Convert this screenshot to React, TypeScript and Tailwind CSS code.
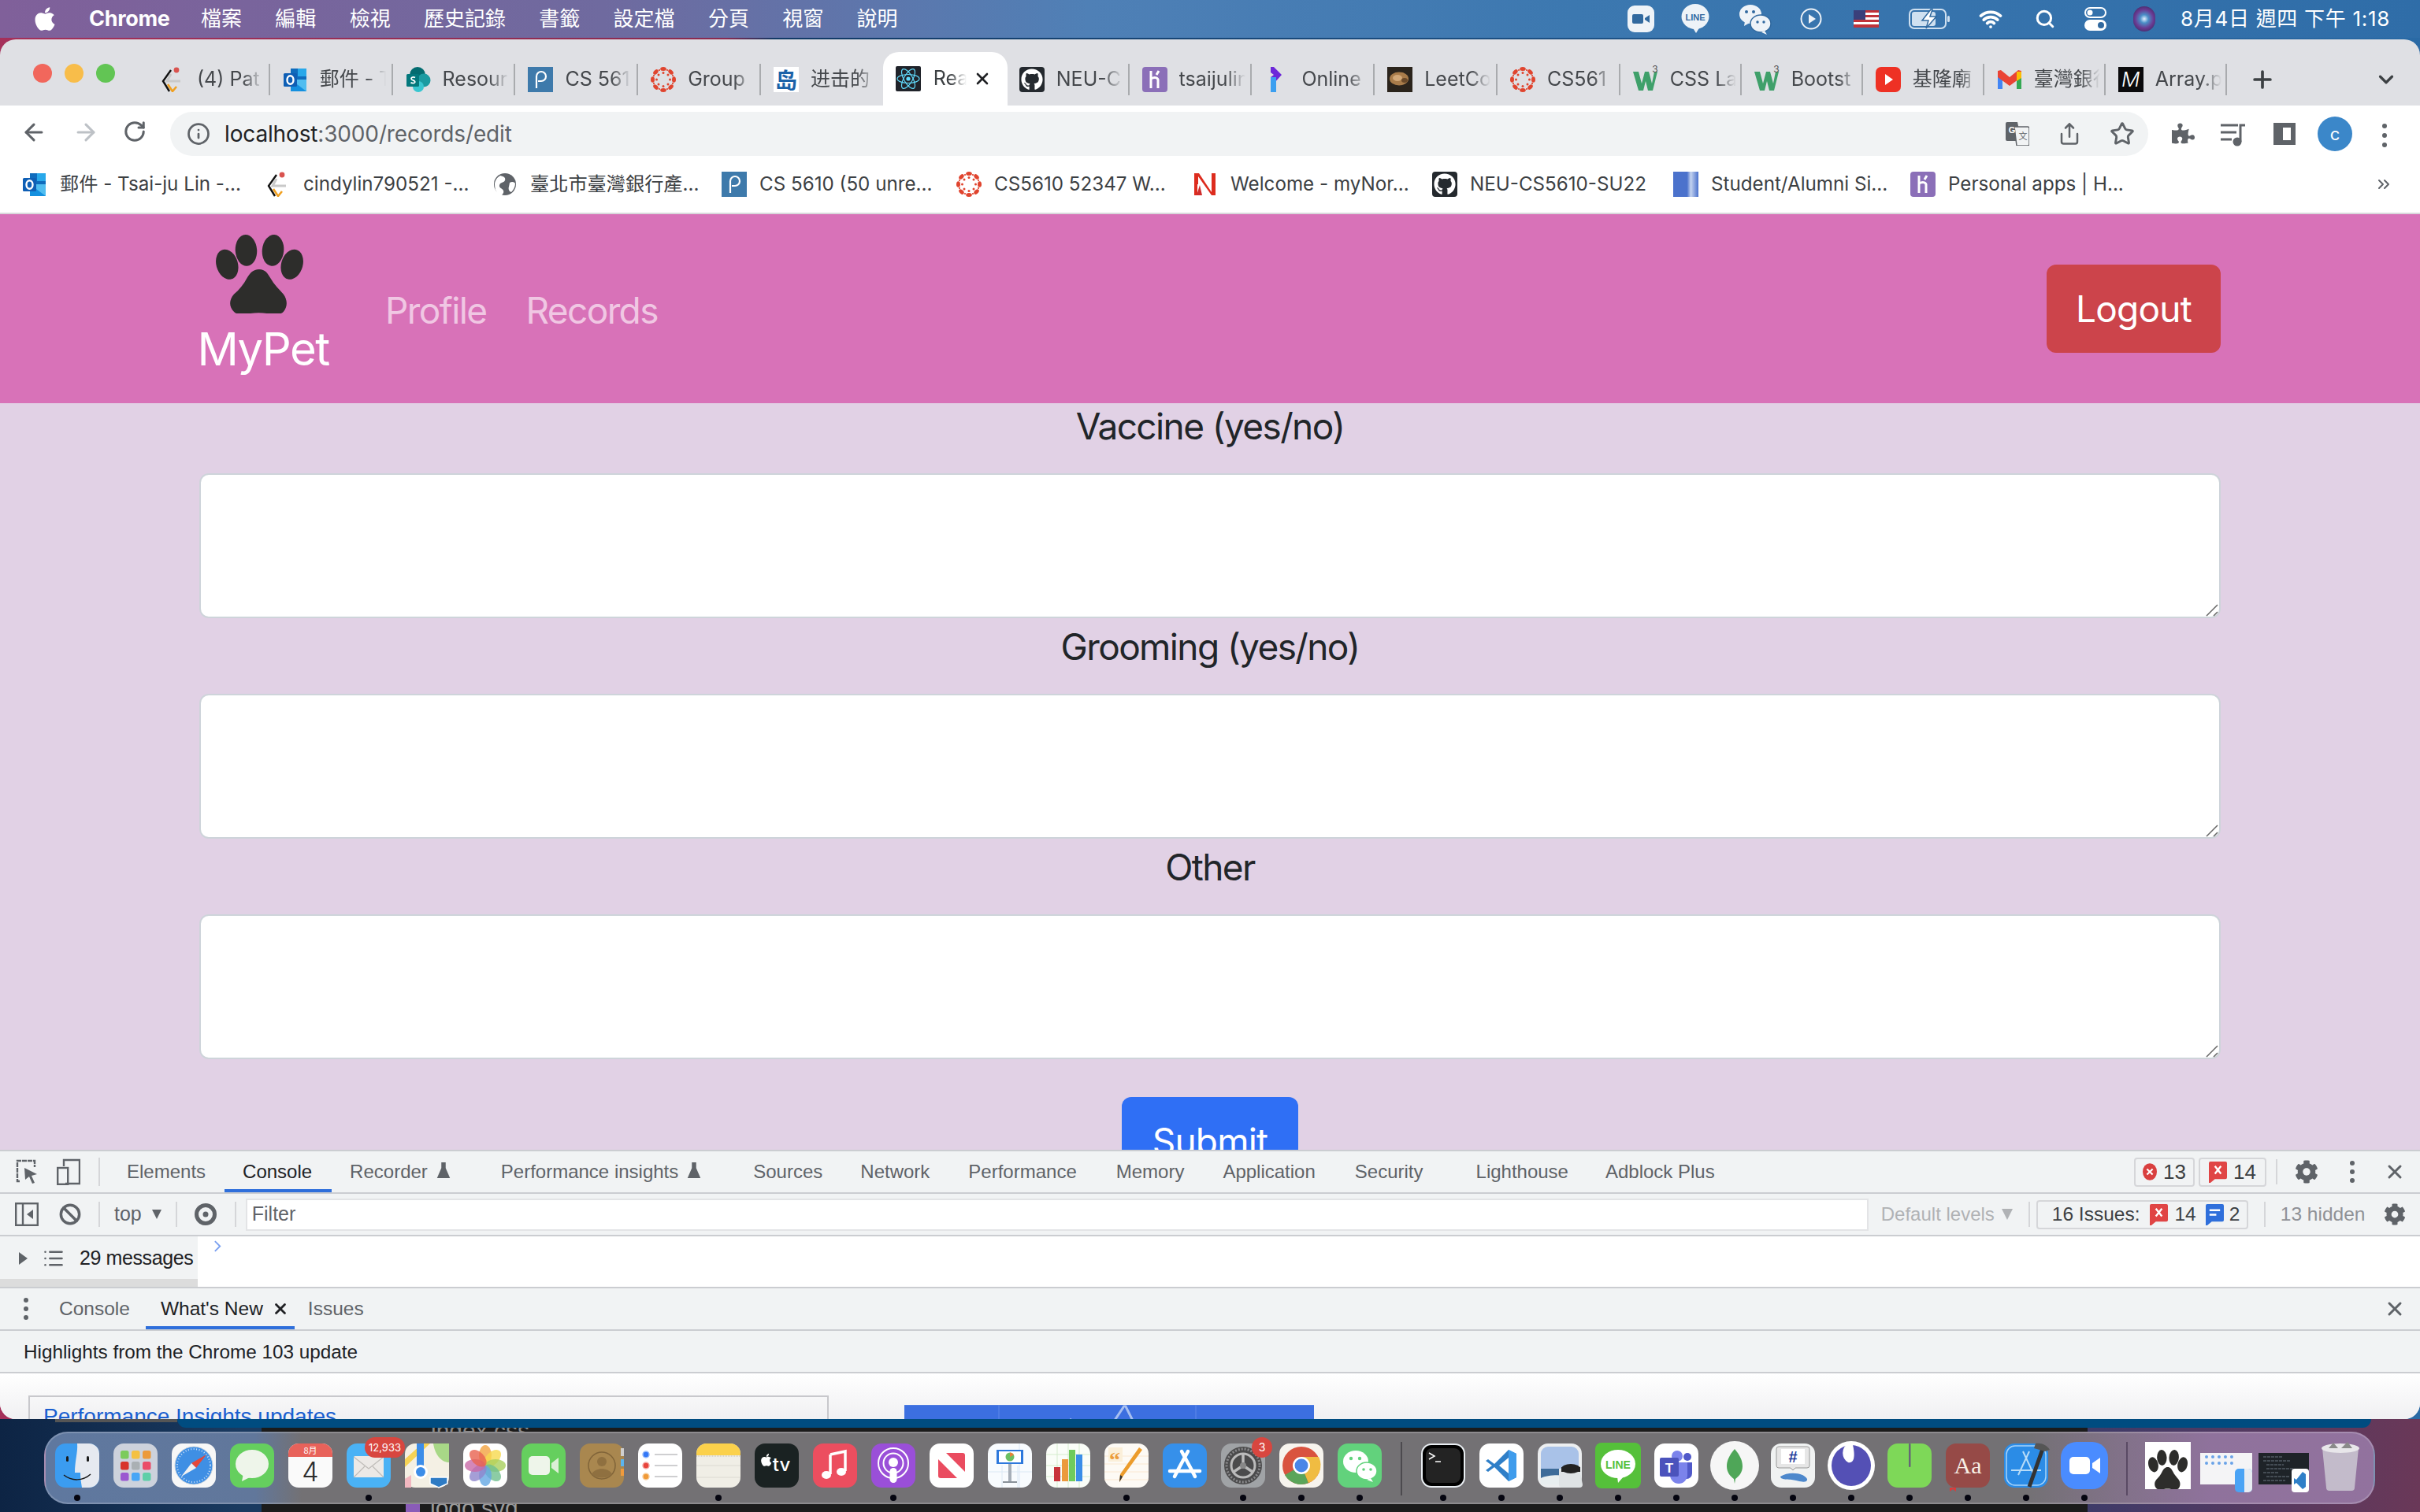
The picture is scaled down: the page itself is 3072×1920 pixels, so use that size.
import React from "react";
import { ArrowLeft, ArrowRight, RotateCw, Info, Share, Star, Wifi, Search, Plus, ChevronDown, X, ChevronsRight, Ban, List } from "lucide-react";
import { FaApple, FaCog, FaGithub, FaPuzzlePiece } from "react-icons/fa";

const cjk = "font-['Inter','Noto_Sans_CJK_TC',sans-serif]";
const dev = "font-['Liberation_Sans','Noto_Sans_CJK_TC',sans-serif]";

function Paw({ className }: { className?: string }) {
  return (
    <svg viewBox="6 0 101 98" preserveAspectRatio="none" className={className} fill="#2d2d2b">
      <ellipse cx="19" cy="37" rx="12.5" ry="19" transform="rotate(-14 19 37)" />
      <ellipse cx="41" cy="19.5" rx="12.5" ry="19.5" transform="rotate(-3 41 19.5)" />
      <ellipse cx="72" cy="19.5" rx="12.5" ry="19.5" transform="rotate(5 72 19.5)" />
      <ellipse cx="94" cy="37" rx="12.5" ry="19" transform="rotate(14 94 37)" />
      <path d="M56 43c7 0 10 5 13 11 4 8 10 14 15 20 5 7 5 16 0 22-5 5-12 3-19 2-6-1-13-1-19 0-7 1-14 3-19-2-6-6-6-15 0-22 6-5 11-12 15-20 3-6 7-11 14-11z" />
    </svg>
  );
}

/* ---------- favicons (32x32) ---------- */
const Fav = ({ children, className = "" }: { children: React.ReactNode; className?: string }) => (
  <svg viewBox="0 0 32 32" className={`w-8 h-8 shrink-0 ${className}`}>{children}</svg>
);
const Cf = () => (
  <Fav>
    <path d="M14 4 4 18l8 13" fill="none" stroke="#111" strokeWidth="2.4" />
    <path d="M14 9 9 18h17" fill="none" stroke="#c9c9c9" strokeWidth="3" />
    <path d="m10 22 6 9 5-6" fill="none" stroke="#f0a020" strokeWidth="2.6" />
    <circle cx="21" cy="4" r="3.4" fill="#d9534f" />
  </Fav>
);
const Outlook = () => (
  <Fav>
    <rect x="10" y="2" width="20" height="14" fill="#0f6cbd" />
    <rect x="19" y="2" width="11" height="10" fill="#28a8ea" />
    <path d="M10 16h20v15H10z" fill="#1490df" />
    <path d="m10 16 20 15V16z" fill="#50bdf0" />
    <rect x="1" y="8" width="17" height="17" rx="1.5" fill="#0f5fb5" />
    <ellipse cx="9.500" cy="16.500" rx="4" ry="5.200" fill="none" stroke="#fff" strokeWidth="2.400" />
  </Fav>
);
const SharePoint = () => (
  <Fav>
    <circle cx="15" cy="10" r="10" fill="#036c70" />
    <circle cx="23" cy="17" r="8.500" fill="#1a9ba1" />
    <circle cx="16" cy="25" r="7" fill="#37c6d0" />
    <rect x="1" y="9" width="16" height="16" rx="1.500" fill="#03787c" />
    <path d="M12 13.500c-3-1.500-6 0-4.500 2.200 1 1.300 4.800 1.700 4.200 3.800-.6 1.700-3.800 1.400-5.200.3" fill="none" stroke="#fff" strokeWidth="1.800" />
  </Fav>
);
const Piazza = () => (
  <Fav>
    <rect width="32" height="32" fill="#3e7aab" />
    <path d="M11 27V12a6 6 0 1 1 6 6h-4" fill="none" stroke="#fff" strokeWidth="2.200" />
  </Fav>
);
const Canvas = () => (
  <Fav>
    {Array.from({ length: 8 }).map((_, i) => {
      const a = (i * Math.PI) / 4 - Math.PI / 2;
      const b = a + Math.PI / 8;
      return (
        <g key={i} fill="#e0442e">
          <ellipse cx={16 + 13.5 * Math.cos(a)} cy={16 + 13.5 * Math.sin(a)} rx="3.800" ry="2.500" transform={`rotate(${i * 45} ${16 + 13.5 * Math.cos(a)} ${16 + 13.5 * Math.sin(a)})`} />
          <circle cx={16 + 8.5 * Math.cos(a)} cy={16 + 8.5 * Math.sin(a)} r="1.500" />
          <circle cx={16 + 13 * Math.cos(b)} cy={16 + 13 * Math.sin(b)} r="1.100" />
        </g>
      );
    })}
  </Fav>
);
const Dao = () => (
  <span className="w-8 h-8 shrink-0 bg-white text-[#1b62a8] text-[28px] leading-8 font-bold text-center font-['Noto_Sans_CJK_SC',sans-serif]">岛</span>
);
const ReactFav = () => (
  <Fav>
    <rect width="32" height="32" rx="2" fill="#20232a" />
    <g fill="none" stroke="#61dafb" strokeWidth="1.200">
      <ellipse cx="16" cy="16" rx="14" ry="5.500" />
      <ellipse cx="16" cy="16" rx="14" ry="5.500" transform="rotate(60 16 16)" />
      <ellipse cx="16" cy="16" rx="14" ry="5.500" transform="rotate(120 16 16)" />
    </g>
    <circle cx="16" cy="16" r="2.600" fill="#61dafb" />
  </Fav>
);
const GitHub = () => (
  <span className="w-8 h-8 shrink-0 rounded-[4px] bg-[#24292e] flex items-center justify-center text-white"><FaGithub size={28} /></span>
);
const Heroku = () => (
  <Fav>
    <rect width="32" height="32" rx="4" fill="#8b6fb8" />
    <path d="M11 5v22M11 15c4-2 8-2 9 1v11M21 5l-3 5" fill="none" stroke="#fff" strokeWidth="3" />
  </Fav>
);
const Pluralsight = () => (
  <Fav>
    <path d="M8 0h4l10 10-10 11H8v-8l4-3-4-3z" fill="#6d28d9" />
    <path d="M8 13h7v3H15v16H8z" fill="#3b9ff0" />
  </Fav>
);
const Cat = () => (
  <Fav>
    <rect width="32" height="32" fill="#2b241c" />
    <ellipse cx="15" cy="15" rx="12" ry="8.500" fill="#a97c4a" />
    <ellipse cx="13" cy="14" rx="6" ry="4" fill="#d2a878" />
    <ellipse cx="22" cy="17" rx="4" ry="3" fill="#6b4a2a" />
  </Fav>
);
const W3 = () => (
  <span className="relative w-8 h-8 shrink-0">
    <svg viewBox="0 0 32 32" className="w-8 h-8"><path d="M0 6h7l4 15 4-15h5l4 15 3-15h4l-6 24h-6l-3-12-3 12H7z" fill="#3fa06a" /></svg>
    <span className="absolute -top-[3px] right-0 text-[12px] leading-none text-[#555]">3</span>
  </span>
);
const Youtube = () => (
  <Fav>
    <rect y="0" width="32" height="32" rx="7" fill="#ee3124" />
    <path d="m12 9 10 7-10 7z" fill="#fff" />
  </Fav>
);
const Gmail = () => (
  <Fav>
    <path d="M1 7v21h6V14z" fill="#4285f4" />
    <path d="M31 7v21h-6V14z" fill="#34a853" />
    <path d="M1 5v8l15 11 15-11V5l-4-1-11 9L5 4z" fill="#ea4335" />
    <path d="M25 6h6v8l-6 4z" fill="#fbbc04" />
  </Fav>
);
const MM = () => (
  <span className="w-8 h-8 shrink-0 bg-[#0b0b0d] text-white italic font-light text-[26px] leading-8 text-center font-['Inter',sans-serif]">M</span>
);
const Globe = () => (
  <Fav>
    <circle cx="16" cy="16" r="14" fill="#5f6368" />
    <path d="M10 5c5 1 7 3 6 6s-6 2-7 6 4 4 5 7-1 4-2 6c-2 0-4-1-6-3-2-3-3-7-3-11 0-4 3-9 7-11zM22 14c3-2 6-1 7 1 0 4-2 8-5 11-3-1-4-4-3-7z" fill="#fff" />
  </Fav>
);
const Norton = () => (
  <Fav>
    <path d="M2 2h6l16 24V2h5v28h-5L7 6v24H2z" fill="#dd2c1e" />
    <rect x="6" y="16" width="6" height="14" fill="#fff" />
    <path d="M5 30 9 17l3 13z" fill="#cf2e2e" />
  </Fav>
);
const DocBlue = () => (
  <span className="w-8 h-8 shrink-0 bg-[linear-gradient(90deg,#4b72cc_0%,#4b72cc_55%,#c4d3f0_70%,#4b72cc_100%)]" />
);

/* ---------- browser chrome ---------- */
type TabT = { t: string; icon: React.ReactNode; w: string };
const tabs: TabT[] = [
  { t: "(4) Pat", icon: <Cf />, w: "w-[155.800px]" },
  { t: "郵件 - Ts", icon: <Outlook />, w: "w-[155.800px]" },
  { t: "Resour", icon: <SharePoint />, w: "w-[155.800px]" },
  { t: "CS 561", icon: <Piazza />, w: "w-[155.800px]" },
  { t: "Group", icon: <Canvas />, w: "w-[155.800px]" },
  { t: "进击的", icon: <Dao />, w: "w-[155.800px]" },
  { t: "active", icon: <ReactFav />, w: "w-[155.800px]" },
  { t: "NEU-C", icon: <GitHub />, w: "w-[155.800px]" },
  { t: "tsaijulin", icon: <Heroku />, w: "w-[155.800px]" },
  { t: "Online", icon: <Pluralsight />, w: "w-[155.800px]" },
  { t: "LeetCo", icon: <Cat />, w: "w-[155.800px]" },
  { t: "CS561", icon: <Canvas />, w: "w-[155.800px]" },
  { t: "CSS La", icon: <W3 />, w: "w-[154px]" },
  { t: "Bootst", icon: <W3 />, w: "w-[154px]" },
  { t: "基隆廟", icon: <Youtube />, w: "w-[154px]" },
  { t: "臺灣銀行", icon: <Gmail />, w: "w-[154px]" },
  { t: "Array.p", icon: <MM />, w: "w-[154px]" },
];

const bookmarks: { t: string; icon: React.ReactNode; w: string }[] = [
  { t: "郵件 - Tsai-ju Lin -...", icon: <Outlook />, w: "w-[237px]" },
  { t: "cindylin790521 -...", icon: <Cf />, w: "w-[216px]" },
  { t: "臺北市臺灣銀行產...", icon: <Globe />, w: "w-[219px]" },
  { t: "CS 5610 (50 unre...", icon: <Piazza />, w: "w-[226px]" },
  { t: "CS5610 52347 W...", icon: <Canvas />, w: "w-[228px]" },
  { t: "Welcome - myNor...", icon: <Norton />, w: "w-[232px]" },
  { t: "NEU-CS5610-SU22", icon: <GitHub />, w: "w-[234px]" },
  { t: "Student/Alumni Si...", icon: <DocBlue />, w: "w-[229px]" },
  { t: "Personal apps | H...", icon: <Heroku />, w: "w-[229px]" },
];

function MenuBar() {
  const items = ["檔案", "編輯", "檢視", "歷史記錄", "書籤", "設定檔", "分頁", "視窗", "說明"];
  return (
    <div className={`h-12 flex items-center text-white text-[26px] bg-[linear-gradient(90deg,#80609a_0%,#6f6a9f_25%,#4f80b6_45%,#3c78b0_65%,#2f6da8_100%)] ${cjk}`}>
      <FaApple className="ml-[42px] w-[30px] h-[34px]" />
      <span className="ml-[41px] font-bold text-[27px] tracking-[-0.300px] w-[100px]">Chrome</span>
      <div className="ml-[42px] flex gap-[42.300px] leading-none">
        {items.map((m) => <span key={m}>{m}</span>)}
      </div>
      <div className="ml-auto flex items-center pr-[38px]">
        <svg viewBox="0 0 34 34" className="w-[34px] h-[34px]"><rect width="34" height="34" rx="9" fill="#eef3f8" /><rect x="6" y="11" width="14" height="12" rx="2" fill="#31699f" /><path d="m22 16 6-4v10l-6-4z" fill="#31699f" /></svg>
        <svg viewBox="0 0 36 40" className="w-[36px] h-[40px] ml-[34px]"><ellipse cx="18" cy="17" rx="17.500" ry="16" fill="#eef3f8" /><path d="M14 30h10l-5 8z" fill="#eef3f8" /><text x="18" y="22" textAnchor="middle" fontSize="11" fontWeight="700" fill="#31699f" fontFamily="Liberation Sans">LINE</text></svg>
        <svg viewBox="0 0 42 42" className="w-[42px] h-[42px] ml-[37px]"><ellipse cx="15" cy="15" rx="14" ry="12" fill="#eef3f8" /><path d="m8 24-1 6 7-4z" fill="#eef3f8" /><ellipse cx="28" cy="27" rx="13" ry="11" fill="#eef3f8" stroke="#31699f" strokeWidth="1.500" /><path d="m33 36 3 5-7-3z" fill="#eef3f8" /><circle cx="10" cy="12" r="2" fill="#31699f" /><circle cx="19" cy="12" r="2" fill="#31699f" /><circle cx="24" cy="25" r="1.700" fill="#31699f" /><circle cx="32" cy="25" r="1.700" fill="#31699f" /></svg>
        <svg viewBox="0 0 28 28" className="w-[28px] h-[28px] ml-[36px]"><circle cx="14" cy="14" r="12.500" fill="none" stroke="#eef3f8" strokeWidth="2" /><path d="m11 8 9 6-9 6z" fill="#eef3f8" /></svg>
        <svg viewBox="0 0 32 22" className="w-[32px] h-[22px] ml-[40px]"><rect width="32" height="22" fill="#fff" /><g fill="#c0323a"><rect width="32" height="3" /><rect y="6" width="32" height="3" /><rect y="12" width="32" height="3" /><rect y="18" width="32" height="4" /></g><rect width="15" height="12" fill="#3a3f7a" /></svg>
        <svg viewBox="0 0 52 26" className="w-[52px] h-[26px] ml-[38px]"><rect x="1" y="1" width="46" height="24" rx="6" fill="none" stroke="#cfe0f0" strokeWidth="2" /><rect x="4" y="4" width="30" height="18" rx="3" fill="#cfe0f0" /><rect x="49" y="9" width="3" height="8" rx="1.500" fill="#cfe0f0" /><path d="M28 1 17 15h8l-3 10 13-15h-8l3-9z" fill="#fff" stroke="#31699f" strokeWidth="1.500" /></svg>
        <Wifi className="w-[34px] h-[30px] ml-[35px]" strokeWidth={3} />
        <Search className="w-[26px] h-[28px] ml-[39px]" strokeWidth={2.800} />
        <svg viewBox="0 0 28 30" className="w-[28px] h-[30px] ml-[37px]"><rect x="1" y="1" width="26" height="12" rx="6" fill="none" stroke="#fff" strokeWidth="2" /><circle cx="7" cy="7" r="3.500" fill="#fff" /><rect y="16" width="28" height="14" rx="7" fill="#fff" /><circle cx="21" cy="23" r="4" fill="#31699f" /></svg>
        <span className="w-[28px] h-[32px] rounded-full ml-[34px] bg-[radial-gradient(circle,#e4f0ff_0%,#4a8fc8_25%,#6a3a92_55%,#2a2450_100%)]" />
        <span className="ml-[32px] leading-none whitespace-nowrap tracking-[0.700px]">8月4日 週四 下午 1:18</span>
      </div>
    </div>
  );
}

function TabStrip() {
  return (
    <div className={`h-[84px] bg-[#dfe0e4] flex items-start ${cjk}`}>
      <div className="w-[187px] pt-[31px] pl-[42px] flex gap-4 shrink-0">
        <span className="w-6 h-6 rounded-full bg-[#f1675c]" />
        <span className="w-6 h-6 rounded-full bg-[#f8bd4a]" />
        <span className="w-6 h-6 rounded-full bg-[#62c554]" />
      </div>
      {tabs.map((tab, i) =>
        tab.t === "active" ? (
          <div key={i} className="relative h-[68px] mt-4 w-[158px] -mx-px z-10 bg-white rounded-t-[20px] flex items-center pl-4 shrink-0">
            {tab.icon}
            <span className="ml-4 text-[25px] text-[#3c4043] w-[42px] overflow-hidden whitespace-nowrap [mask-image:linear-gradient(90deg,#000_50%,transparent)]">React App</span>
            <X className="w-[24px] h-[24px] ml-[8px] text-[#202124]" strokeWidth={2.600} />
          </div>
        ) : (
          <div key={i} className={`relative h-[40px] mt-[31px] flex items-center pl-[16px] shrink-0 ${tab.w} ${i === 5 ? "" : "border-r-2 border-[#a9abae]"}`}>
            {tab.icon}
            <span className="ml-[15px] w-[84px] text-[25px] text-[#45484c] overflow-hidden whitespace-nowrap [mask-image:linear-gradient(90deg,#000_70%,transparent)]">{tab.t}</span>
          </div>
        )
      )}
      <Plus className="ml-[28px] mt-[34px] w-[34px] h-[34px] text-[#3c4043]" strokeWidth={2.600} />
      <ChevronDown className="ml-[125px] mt-[36px] w-[30px] h-[30px] text-[#3c4043]" strokeWidth={2.600} />
    </div>
  );
}

function Toolbar() {
  return (
    <div className={`h-[64px] bg-white flex items-start ${cjk}`}>
      <ArrowLeft className="ml-[26px] mt-[17px] w-[34px] h-[34px] text-[#5f6368]" strokeWidth={2.200} />
      <ArrowRight className="ml-[32px] mt-[17px] w-[34px] h-[34px] text-[#bdc1c6]" strokeWidth={2.200} />
      <RotateCw className="ml-[30px] mt-[18px] w-[30px] h-[30px] text-[#5f6368]" strokeWidth={2.400} />
      <div className="ml-[30px] mt-2 w-[2511px] h-[56px] rounded-[28px] bg-[#f1f3f4] flex items-center pl-[21px]">
        <Info className="w-[30px] h-[30px] text-[#5f6368]" strokeWidth={2.200} />
        <span className="ml-[18px] text-[28px] tracking-[-0.150px] text-[#202124]">localhost<span className="text-[#5f6368]">:3000/records/edit</span></span>
        <div className="ml-auto flex items-center pr-[17px]">
          <svg viewBox="0 0 30 30" className="w-[30px] h-[30px]"><path d="M0 2a2 2 0 0 1 2-2h13l5 24H2a2 2 0 0 1-2-2z" fill="#5f6368" /><path d="M11 6h17a2 2 0 0 1 2 2v20a2 2 0 0 1-2 2H14z" fill="#f1f3f4" stroke="#5f6368" strokeWidth="1.500" /><text x="8" y="14" fontSize="11" fontWeight="700" fill="#fff" textAnchor="middle" fontFamily="Liberation Sans">G</text><text x="22" y="22" fontSize="11" fill="#5f6368" textAnchor="middle" fontFamily="Noto Sans CJK TC">文</text></svg>
          <Share className="ml-[36px] w-[30px] h-[32px] text-[#5f6368]" strokeWidth={2} />
          <Star className="ml-[36px] w-[32px] h-[32px] text-[#5f6368]" strokeWidth={2.200} />
        </div>
      </div>
      <FaPuzzlePiece className="ml-[30px] mt-[21px] w-[29px] h-[29px] text-[#5f6368]" />
      <svg viewBox="0 0 32 30" className="ml-[33px] mt-[22px] w-[32px] h-[30px]"><path d="M0 3h22M0 12h20M0 21h14" stroke="#5f6368" strokeWidth="3" /><path d="M25 24V3h6" fill="none" stroke="#5f6368" strokeWidth="3" /><circle cx="21" cy="24" r="5.500" fill="#5f6368" /></svg>
      <span className="ml-[35px] mt-[22px] w-[28px] h-[28px] border-[6px] border-[#5f6368] border-l-[12px] box-border" />
      <span className="ml-[28px] mt-[14px] w-[44px] h-[44px] rounded-full bg-[#3b87c9] text-white text-[22px] leading-[44px] text-center">c</span>
      <div className="ml-[38px] mt-[23px] flex flex-col gap-[6px]">
        <span className="w-[6px] h-[6px] rounded-full bg-[#5f6368]" />
        <span className="w-[6px] h-[6px] rounded-full bg-[#5f6368]" />
        <span className="w-[6px] h-[6px] rounded-full bg-[#5f6368]" />
      </div>
    </div>
  );
}

function Bookmarks() {
  return (
    <div className={`h-[74px] bg-white border-b-2 border-[#d9d9dc] flex items-center pl-[28px] ${cjk}`}>
      {bookmarks.map((b) => (
        <div key={b.t} className="flex items-center shrink-0">
          {b.icon}
          <span className={`ml-[16px] text-[24.200px] text-[#3c4043] whitespace-nowrap ${b.w}`}>{b.t}</span>
          <span className="w-[24px]" />
        </div>
      ))}
      <ChevronsRight className="ml-auto mr-[34px] w-[24px] h-[24px] text-[#5f6368]" strokeWidth={2} />
    </div>
  );
}

/* ---------- page ---------- */
function Field({ label, first }: { label: string; first?: boolean }) {
  return (
    <div className={first ? "-mt-[7px] flex flex-col" : "flex flex-col"}>
      <label className="h-[72px] mb-6 text-[46px] leading-[72px] text-center text-[#212529]">{label}</label>
      <div className="relative h-[184px]">
        <textarea className="block w-full h-[184px] rounded-[12px] bg-white border-2 border-[#ced4da] resize-none" />
        <svg viewBox="0 0 16 16" className="absolute right-[3px] bottom-[2px] w-[16px] h-[16px] pointer-events-none">
          <path d="M1 15 15 1M10 15l5-5" stroke="#666" strokeWidth="1.500" />
        </svg>
      </div>
    </div>
  );
}

function Page() {
  return (
    <div className="h-[1188px] bg-[#e1d1e5] overflow-hidden font-['Inter',sans-serif] tracking-[-1.600px]">
      <nav className="relative z-10 h-[240px] bg-[#d872b8] px-[253px] flex items-start">
        <div className="w-[162px] pt-[26px] flex flex-col items-center">
          <Paw className="w-[111px] h-[100px] -ml-[10px]" />
          <span className="mt-[15px] text-[58px] leading-[60px] text-white whitespace-nowrap">MyPet</span>
        </div>
        <span className="ml-[74px] mt-[86px] text-[46px] leading-[72px] text-[#f0c7e3]">Profile</span>
        <span className="ml-[50px] mt-[86px] text-[46px] leading-[72px] text-[#f0c7e3]">Records</span>
        <button className="ml-auto mt-[64px] w-[221px] h-[112px] rounded-[12px] bg-[#cc444b] text-white text-[46px] tracking-[-0.800px]">Logout</button>
      </nav>
      <div className="px-[253px]">
        <Field label="Vaccine (yes/no)" first />
        <Field label="Grooming (yes/no)" />
        <Field label="Other" />
        <div className="mt-[48px] flex justify-center">
          <button className="w-[224px] h-[112px] rounded-[12px] bg-[#2f6ff5] text-white text-[46px] tracking-[-0.800px]">Submit</button>
        </div>
      </div>
    </div>
  );
}

/* ---------- devtools ---------- */
const Flask = () => (
  <svg viewBox="0 0 18 24" className="w-[18px] h-[22px] ml-[11px] -mt-1 inline-block"><path d="M6 1h6v8l6 14H0L6 9z" fill="#5f6368" /></svg>
);
const Sep = ({ className = "" }: { className?: string }) => <span className={`w-[2px] h-[32px] bg-[#d5d6d9] shrink-0 ${className}`} />;
const Bubble = ({ color, kind }: { color: string; kind: "x" | "msg" }) => (
  <svg viewBox="0 0 24 28" className="w-[23px] h-[27px] shrink-0">
    <path d="M0 2a2 2 0 0 1 2-2h20a2 2 0 0 1 2 2v19a2 2 0 0 1-2 2H8l-6 5H0z" fill={color} />
    {kind === "x" ? <path d="m8 6 8 10M16 6 8 16" stroke="#fff" strokeWidth="2.500" /> : <path d="M5 8h14M5 14h9" stroke="#fff" strokeWidth="2.500" />}
  </svg>
);
const Dots = ({ className = "" }: { className?: string }) => (
  <div className={`flex flex-col gap-[5px] ${className}`}>
    <span className="w-[6px] h-[6px] rounded-full bg-[#5f6368]" />
    <span className="w-[6px] h-[6px] rounded-full bg-[#5f6368]" />
    <span className="w-[6px] h-[6px] rounded-full bg-[#5f6368]" />
  </div>
);

function DevTools() {
  return (
    <div className={`border-t-2 border-[#cbcdd1] bg-[#f1f3f4] text-[24px] text-[#5f6368] ${dev}`}>
      <div className="h-[54px] border-b-2 border-[#cbcdd1] flex items-center pl-[20px]">
        <svg viewBox="0 0 28 32" className="w-[28px] h-[32px]"><path d="M5 28H2V2h22v8" fill="none" stroke="#5f6368" strokeWidth="2.400" strokeDasharray="6 1" /><path d="m11 11 16 8-7 2 4 9-3 1-4-9-5 4z" fill="#5f6368" /></svg>
        <svg viewBox="0 0 30 34" className="ml-[24px] w-[30px] h-[34px]"><path d="M9 10V2h20v30H11" fill="none" stroke="#5f6368" strokeWidth="2.400" /><rect x="1.200" y="12" width="13" height="20.800" fill="none" stroke="#5f6368" strokeWidth="2.400" /></svg>
        <Sep className="ml-[23px] h-[36px]" />
        <span className="ml-[34px]">Elements</span>
        <span className="relative ml-[47px] h-[52px] leading-[52px] text-[#202124]">
          Console
          <span className="absolute -left-[23px] -right-[25px] -bottom-0 h-[4px] bg-[#2f6fdb]" />
        </span>
        <span className="ml-[48px]">Recorder</span><Flask />
        <span className="ml-[64px]">Performance insights</span><Flask />
        <span className="ml-[66px]">Sources</span>
        <span className="ml-[48px]">Network</span>
        <span className="ml-[49px]">Performance</span>
        <span className="ml-[50px]">Memory</span>
        <span className="ml-[49px]">Application</span>
        <span className="ml-[50px]">Security</span>
        <span className="ml-[67px]">Lighthouse</span>
        <span className="ml-[47px]">Adblock Plus</span>
        <div className="ml-auto flex items-center pr-[18px]">
          <div className="w-[77px] h-[37px] border-2 border-[#d5d6d9] rounded-[4px] flex items-center justify-center gap-[8px] text-[26px] text-[#3c4043]">
            <svg viewBox="0 0 20 24" className="w-[18px] h-[22px]"><ellipse cx="10" cy="12" rx="10" ry="12" fill="#d93f3f" /><path d="m6 8 8 8M14 8l-8 8" stroke="#fff" strokeWidth="2.400" /></svg>
            <span>13</span>
          </div>
          <div className="ml-[5px] w-[86px] h-[37px] border-2 border-[#d5d6d9] rounded-[4px] flex items-center justify-center gap-[8px] text-[26px] text-[#3c4043]">
            <Bubble color="#e04545" kind="x" />
            <span>14</span>
          </div>
          <Sep className="ml-[12px]" />
          <FaCog className="ml-[22px] w-[30px] h-[30px]" />
          <Dots className="ml-[40px]" />
          <X className="ml-[37px] w-[28px] h-[28px]" strokeWidth={2.600} />
        </div>
      </div>
      <div className="h-[54px] border-b-2 border-[#cbcdd1] flex items-center pl-[19px]">
        <svg viewBox="0 0 30 30" className="w-[30px] h-[30px]"><rect x="1.200" y="1.200" width="27.600" height="27.600" fill="none" stroke="#5f6368" strokeWidth="2.400" /><path d="M10 1v28" stroke="#5f6368" strokeWidth="2.400" /><path d="M23 9v12l-8-6z" fill="#5f6368" /></svg>
        <Ban className="ml-[26px] w-[28px] h-[28px]" strokeWidth={3} />
        <Sep className="ml-[22px]" />
        <span className="ml-[18px] text-[25px]">top</span>
        <span className="ml-[13px] w-0 h-0 border-x-[6px] border-x-transparent border-t-[12px] border-t-[#5f6368]" />
        <Sep className="ml-[18px]" />
        <svg viewBox="0 0 30 30" className="ml-[21px] w-[30px] h-[30px]"><circle cx="15" cy="15" r="11.500" fill="none" stroke="#5f6368" strokeWidth="5" /><circle cx="15" cy="15" r="3.500" fill="#5f6368" /></svg>
        <Sep className="ml-[22px]" />
        <div className="ml-[12px] w-[2060px] h-[41px] bg-white border-2 border-[#e3e4e6] flex items-center pl-[6px] text-[25px]">Filter</div>
        <span className="ml-[16px] w-[142px] text-[24px] text-[#b0b2b5] whitespace-nowrap">Default levels</span>
        <span className="ml-[11px] w-0 h-0 border-x-[7px] border-x-transparent border-t-[14px] border-t-[#b0b2b5]" />
        <Sep className="ml-[20px]" />
        <div className="ml-[8px] w-[269px] h-[37px] border-2 border-[#d5d6d9] rounded-[4px] flex items-center pl-[18px] text-[#3c4043] text-[24.500px] whitespace-nowrap shrink-0">
          <span>16 Issues:</span>
          <span className="ml-[13px]"><Bubble color="#e04545" kind="x" /></span>
          <span className="ml-[8px]">14</span>
          <span className="ml-[12px]"><Bubble color="#2f6fdb" kind="msg" /></span>
          <span className="ml-[7px]">2</span>
        </div>
        <Sep className="ml-[20px]" />
        <span className="ml-[19px] text-[24.500px] text-[#8f9196] whitespace-nowrap">13 hidden</span>
        <FaCog className="ml-auto mr-[18px] w-[28px] h-[28px]" />
      </div>
      <div className="h-[66px] border-b-2 border-[#cbcdd1] flex bg-white">
        <div className="w-[251px] bg-[#f1f3f4] flex flex-col">
          <div className="h-[54px] pt-[2px] flex items-center pl-[24px] text-[#202124]">
            <span className="w-0 h-0 border-y-[8px] border-y-transparent border-l-[11px] border-l-[#5f6368]" />
            <List className="ml-[19px] w-[28px] h-[28px] text-[#5f6368]" strokeWidth={2.200} />
            <span className="ml-[19px] text-[25px] tracking-[-0.400px] whitespace-nowrap">29 messages</span>
          </div>
          <div className="flex-1 bg-[#dcdcdc]" />
        </div>
        <svg viewBox="0 0 12 16" className="ml-[20px] mt-[5px] w-[11px] h-[15px]"><path d="m2 1 7 7-7 7" fill="none" stroke="#7aa0f0" strokeWidth="2" /></svg>
      </div>
      <div className="h-[54px] border-b-2 border-[#cbcdd1] flex items-center text-[24.500px]">
        <Dots className="ml-[30px]" />
        <span className="ml-[39px]">Console</span>
        <span className="relative ml-[39px] h-[52px] leading-[52px] text-[#202124] flex items-center">
          What's New
          <X className="ml-[11px] w-[22px] h-[22px]" strokeWidth={3} />
          <span className="absolute -left-[19px] -right-[7px] -bottom-0 h-[4px] bg-[#2f6fdb]" />
        </span>
        <span className="ml-[24px]">Issues</span>
        <X className="ml-auto mr-[18px] w-[28px] h-[28px]" strokeWidth={2.600} />
      </div>
      <div className="h-[54px] pt-[2px] border-b-2 border-[#cbcdd1] flex items-center pl-[30px] text-[24.300px] text-[#202124]">Highlights from the Chrome 103 update</div>
      <div className="h-[58px] bg-[linear-gradient(180deg,#ffffff_0%,#f0f0f2_100%)] flex items-start overflow-hidden pl-[36px]">
        <div className="mt-[28px] w-[1016px] h-[60px] border-2 border-[#c8c8cc] pl-[17px] pt-[4px] text-[28px] text-[#1a5fd0] whitespace-nowrap">Performance Insights updates</div>
        <svg viewBox="0 0 520 60" className="ml-[96px] mt-[40px] w-[520px] h-[60px]"><rect width="520" height="60" fill="#3c6fe0" /><path d="M210 18 270 60 M280 0 l-40 60 M280 0l30 60" stroke="#a8c0f0" strokeWidth="3" fill="none" /><path d="M0 0h520M120 0v60M370 0v60" stroke="#5f8ae8" strokeWidth="1" /></svg>
      </div>
    </div>
  );
}

/* ---------- dock ---------- */
const Tile = ({ children, bg = "#fff" }: { children?: React.ReactNode; bg?: string }) => (
  <svg viewBox="0 0 56 56" className="w-[56px] h-[56px] overflow-visible">
    <rect width="56" height="56" rx="13" fill={bg} />
    {children}
  </svg>
);

const dock: { el: React.ReactNode; dot?: boolean }[] = [
  { dot: true, el: <Tile bg="#3b9cf0"><path d="M28 0h15a13 13 0 0 1 13 13v30a13 13 0 0 1-13 13H34c-1-6-2-12-2-19H25C25 22 29 11 28 0z" fill="#e6e9f0" /><path d="M11 40c10 8 24 8 34-1" fill="none" stroke="#1a1a1a" strokeWidth="1.500" /><rect x="14" y="16" width="3" height="7" rx="1.500" fill="#1a1a1a" /><rect x="40" y="16" width="3" height="7" rx="1.500" fill="#1a1a1a" /></Tile> },
  { el: <Tile bg="#cdd2dc">{["#7ccb5c", "#f5c143", "#ec9a3c", "#d8352c", "#aab0b4", "#ea4c68", "#9a58d0", "#48a6f6", "#5fcfa8"].map((c, i) => <rect key={c} x={9 + (i % 3) * 14} y={9 + Math.floor(i / 3) * 14} width="10.500" height="10.500" rx="2.500" fill={c} />)}</Tile> },
  { el: <Tile bg="#f7f7f7"><circle cx="28" cy="28" r="24" fill="#3f8fe4" stroke="#c8d2dc" strokeWidth="1" /><circle cx="28" cy="28" r="21" fill="none" stroke="#cfe2f8" strokeWidth="2" strokeDasharray="1 2.500" /><path d="m44 14-19 11 6 6z" fill="#e5483a" /><path d="m12 42 19-11-6-6z" fill="#f2f2f2" /></Tile> },
  { el: <Tile bg="#65cf5e"><ellipse cx="28" cy="26" rx="21" ry="18" fill="#eef5ea" /><path d="m17 38-2 10 12-6z" fill="#eef5ea" /></Tile> },
  { el: <Tile bg="#fafafa"><path d="M0 17V13A13 13 0 0 1 13 0h30a13 13 0 0 1 13 13v4z" fill="#e8625a" /><text x="28" y="13" textAnchor="middle" fontSize="11" fill="#fff" fontFamily="Noto Sans CJK TC">8月</text><text x="28" y="48" textAnchor="middle" fontSize="34" fill="#2d2d2d" fontFamily="Inter" fontWeight="300">4</text></Tile> },
  { dot: true, el: <Tile bg="#4ab2f5"><rect x="9" y="16" width="38" height="27" rx="2" fill="#ece9e6" /><path d="m9 17 19 15 19-15M9 43l14-14M47 43 33 29" fill="none" stroke="#bfbcb8" strokeWidth="1.200" /></Tile> },
  { el: <Tile bg="#f4f0e4"><path d="M0 20 22 0h10L0 30z" fill="#f6d355" /><path d="M36 0h20v24C46 24 38 14 36 0z" fill="#a8d887" /><rect x="15" y="0" width="9" height="30" fill="#3c8de8" /><circle cx="20" cy="36" r="9" fill="#fff" /><circle cx="20" cy="36" r="6" fill="#3c8de8" /><path d="M0 45 8 40v16H0z" fill="#f2b7c0" /><path d="M32 43h22v8l-11 5-11-5z" fill="#2e7bc4" stroke="#fff" strokeWidth="1.500" /></Tile> },
  { el: <Tile bg="#fff">{["#f2a340", "#f6d94e", "#a9cf5d", "#6fbf8f", "#64a8e4", "#8f86cc", "#c869a8", "#e8624f"].map((c, i) => <ellipse key={c} cx="28" cy="15" rx="8" ry="13" fill={c} opacity="0.800" transform={`rotate(${i * 45} 28 28)`} />)}</Tile> },
  { el: <Tile bg="#65cf5e"><rect x="9" y="16" width="27" height="24" rx="5" fill="#eef5ea" /><path d="m38 25 9-7v20l-9-7z" fill="#dcefd6" /></Tile> },
  { el: <Tile bg="#a9874f"><rect x="52" y="6" width="4" height="10" fill="#cfcfcf" /><rect x="52" y="20" width="4" height="9" fill="#5ab4ef" /><rect x="52" y="32" width="4" height="9" fill="#ef9a3c" /><circle cx="28" cy="28" r="17" fill="none" stroke="#806439" strokeWidth="1.500" /><circle cx="28" cy="23" r="6" fill="#8f7040" /><path d="M15 39c4-9 22-9 26 0-7 6-19 6-26 0z" fill="#8f7040" /></Tile> },
  { el: <Tile bg="#fff"><circle cx="10" cy="14" r="4" fill="#3478f6" stroke="#9bbcf8" strokeWidth="1.500" /><circle cx="10" cy="28" r="4" fill="#e8453c" stroke="#f5aaa6" strokeWidth="1.500" /><circle cx="10" cy="42" r="4" fill="#f09a37" stroke="#f8cf9f" strokeWidth="1.500" /><path d="M21 14h29M21 28h29M21 42h29" stroke="#cfcfd1" strokeWidth="2" /></Tile> },
  { dot: true, el: <Tile bg="#f0eee6"><path d="M0 15V13A13 13 0 0 1 13 0h30a13 13 0 0 1 13 13v2z" fill="#fbd14b" /><path d="M0 28h56M0 43h56" stroke="#dcdad2" strokeWidth="1" /><path d="M0 16h56" stroke="#bdbbb4" strokeWidth="1" strokeDasharray="1 1" /></Tile> },
  { el: <Tile bg="#1a2222"><text x="34" y="35" textAnchor="middle" fontSize="24" fontWeight="500" fill="#fff" fontFamily="Inter">tv</text><g transform="translate(8 12) scale(.035)" fill="#fff"><path d="M318.700 268.700c-.2-36.700 16.400-64.400 50-84.800-18.800-26.900-47.200-41.700-84.700-44.600-35.500-2.800-74.300 20.700-88.500 20.700-15 0-49.400-19.700-76.400-19.700C63.300 141.200 4 184.800 4 273.500q0 39.300 14.400 81.200c12.800 36.700 59 126.700 107.200 125.200 25.200-.6 43-17.900 75.800-17.900 31.800 0 48.300 17.900 76.400 17.900 48.600-.7 90.400-82.500 102.600-119.300-65.200-30.700-61.700-90-61.700-91.900zm-56.600-164.200c27.300-32.400 24.800-61.900 24-72.500-24.100 1.400-52 16.400-67.900 34.900-17.500 19.800-27.800 44.300-25.600 71.900 26.100 2 49.900-11.400 69.500-34.300z" /></g></Tile> },
  { el: <Tile bg="#ec4e5f"><path d="M22 14v25M22 14l19-4v25" fill="none" stroke="#fff" strokeWidth="3.500" /><ellipse cx="17" cy="40" rx="6" ry="5" fill="#fff" /><ellipse cx="36" cy="36" rx="6" ry="5" fill="#fff" /></Tile> },
  { dot: true, el: <Tile bg="#9a4fd8"><circle cx="28" cy="25" r="19" fill="none" stroke="#fff" strokeWidth="2" /><circle cx="28" cy="25" r="12.500" fill="none" stroke="#fff" strokeWidth="2" /><circle cx="28" cy="24" r="6" fill="#fff" /><rect x="23.500" y="31" width="9" height="19" rx="4.500" fill="#fff" /></Tile> },
  { el: <Tile bg="#fff"><rect x="11" y="12" width="34" height="32" rx="3" fill="#ea4c60" /><path d="M11 12h10l24 24v8H35L11 20z" fill="#fff" /></Tile> },
  { el: <Tile bg="#f8fbfe"><path d="M0 36h56M18 28v28M38 28v28M40 0v56" stroke="#dbe8f5" strokeWidth="1" /><rect x="11" y="8" width="34" height="18" fill="#2d78dc" /><rect x="14" y="10" width="28" height="14" fill="#fff" /><circle cx="28" cy="17" r="5.500" fill="#6bbf63" /><path d="M28 17V11.500a5.500 5.500 0 0 1 5 3z" fill="#e8823a" /><rect x="26" y="26" width="4" height="22" fill="#a6aeb8" /><rect x="19" y="48" width="18" height="2" fill="#8a929a" /></Tile> },
  { el: <Tile bg="#fafdf8"><path d="M0 14h56M0 28h56M0 42h56M14 0v56M28 0v56M42 0v56" stroke="#d5eccd" strokeWidth="1" /><rect x="10" y="30" width="8" height="18" fill="#c8343c" /><rect x="20" y="20" width="8" height="28" fill="#ec9a3c" /><rect x="29" y="8" width="8" height="40" fill="#6fcb5c" /><rect x="38" y="14" width="8" height="34" fill="#3a8ee8" /></Tile> },
  { dot: true, el: <Tile bg="#fdfaf5"><path d="M0 16h56M0 26h56M0 36h56M0 46h56" stroke="#fbe8d2" strokeWidth="1" /><rect x="5" y="5" width="18" height="18" fill="#fbefd9" /><text x="13" y="30" textAnchor="middle" fontSize="28" fontWeight="700" fill="#ec9c3c" fontFamily="Liberation Serif">“</text><path d="m44 5 4 3-24 33-5 8 1-10z" fill="#ec9c2c" /><path d="m19 49 1-9 3 2z" fill="#333" /></Tile> },
  { el: <Tile bg="#3690ea"><path d="M32 10 18 36M24 10l14 26" stroke="#fff" strokeWidth="4.500" strokeLinecap="round" /><path d="M9 35h38" stroke="#fff" strokeWidth="4.500" strokeLinecap="round" /><path d="M15 42 18 36M41 42l-3-6" stroke="#fff" strokeWidth="4.500" strokeLinecap="round" /></Tile> },
  { dot: true, el: <Tile bg="#a0a3a6"><circle cx="28" cy="28" r="24" fill="#4b4b4c" /><circle cx="28" cy="28" r="21" fill="none" stroke="#8a8a8c" strokeWidth="3" strokeDasharray="2 2" /><circle cx="28" cy="28" r="15" fill="none" stroke="#bbb" strokeWidth="3" /><path d="M28 28V14M28 28 16 36M28 28l12 8" stroke="#bbb" strokeWidth="3.500" /><circle cx="28" cy="28" r="4" fill="#888" /></Tile> },
  { dot: true, el: <Tile bg="#f7f4ee"><circle cx="28" cy="28" r="24" fill="#d9533f" /><path d="M28 28 7 40a24 24 0 0 0 30 10z" fill="#5ba55a" /><path d="M28 28 37 50A24 24 0 0 0 50 17H28z" fill="#f0bc42" /><circle cx="28" cy="28" r="11" fill="#fff" /><circle cx="28" cy="28" r="8.500" fill="#4a86e8" /></Tile> },
  { dot: true, el: <Tile bg="#62d27c"><ellipse cx="23" cy="23" rx="16" ry="14" fill="#fff" /><ellipse cx="37" cy="35" rx="13" ry="11" fill="#fff" stroke="#62d27c" strokeWidth="1.500" /><path d="m42 44 3 5-8-3z" fill="#fff" /><circle cx="17" cy="19" r="2.200" fill="#62d27c" /><circle cx="28" cy="19" r="2.200" fill="#62d27c" /><circle cx="33" cy="33" r="1.800" fill="#62d27c" /><circle cx="42" cy="33" r="1.800" fill="#62d27c" /></Tile> },
];

const dock2: { el: React.ReactNode; dot?: boolean }[] = [
  { dot: true, el: <Tile bg="#e9eef2"><rect x="2" y="2" width="52" height="52" rx="11" fill="#000" /><rect x="6" y="6" width="44" height="44" rx="8" fill="#232323" /><path d="m10 12 7 4-7 4M18 23h7" fill="none" stroke="#fff" strokeWidth="1.500" /></Tile> },
  { dot: true, el: <Tile bg="#fff"><path d="M37 8 47 13v30l-10 5L19 30l-8 6-3-2 8-6-8-6 3-2 8 6z" fill="#2f7fc8" /><path d="M37 8 47 13v30l-10 5z" fill="#3f9cec" /><path d="M37 18 25 28l12 10z" fill="#fff" /></Tile> },
  { dot: true, el: <Tile bg="#eceef0"><rect x="4" y="4" width="48" height="48" rx="9" fill="#a9c2e8" /><path d="M4 32h48v20H4z" fill="#3d6b99" /><path d="M4 44c10-5 30-5 48 0v8H4z" fill="#e8eef0" /><path d="M27 32h26l4 20a4 4 0 0 1-4 4H31a4 4 0 0 1-4-4z" fill="#dfe3e5" /><ellipse cx="42" cy="32" rx="12" ry="6" fill="#222" /><rect x="30" y="30" width="24" height="6" fill="#222" /></Tile> },
  { dot: true, el: <Tile bg="#55c03a"><rect x="-1" y="-1" width="58" height="58" rx="8" fill="#55c03a" /><ellipse cx="28" cy="26" rx="22" ry="18" fill="#fff" /><path d="M27 42h8l-7 8z" fill="#fff" /><text x="28" y="32" textAnchor="middle" fontSize="14" fontWeight="700" fill="#55c03a" fontFamily="Liberation Sans">LINE</text></Tile> },
  { dot: true, el: <Tile bg="#fff"><circle cx="29" cy="16" r="7" fill="#7b83eb" /><circle cx="42" cy="17" r="5" fill="#5059c9" /><path d="M36 24h12v14a7 7 0 0 1-7 7h-5z" fill="#5059c9" /><path d="M20 24h22v16a11 11 0 0 1-22 0z" fill="#7b83eb" /><rect x="7" y="18" width="24" height="24" rx="2" fill="#4b53bc" /><text x="19" y="37" textAnchor="middle" fontSize="17" fontWeight="700" fill="#fff" fontFamily="Liberation Sans">T</text></Tile> },
  { dot: true, el: <svg viewBox="0 0 56 56" className="w-[56px] h-[56px] overflow-visible"><circle cx="28" cy="28" r="31" fill="#f6f6f6" /><path d="M28 7c7 8 10 15 10 22 0 8-5 13-9 16l-1 6-1-6c-4-3-9-8-9-16 0-7 3-14 10-22z" fill="#4fa658" /></svg> },
  { dot: true, el: <Tile bg="#f0f2f2"><path d="M10 4h36a3 3 0 0 1 3 3v21a3 3 0 0 1-3 3H31l-3 3-3-3H10a3 3 0 0 1-3-3V7a3 3 0 0 1 3-3z" fill="#e6e6e6" stroke="#999" /><rect x="13" y="7" width="30" height="19" fill="#fff" /><text x="28" y="24" textAnchor="middle" fontSize="20" fontWeight="700" fill="#1f3a9a" fontFamily="Liberation Sans">#</text><path d="M12 42c10-7 30-5 34 3 1 5-7 4-14 2-6-2-20 0-20-5z" fill="#4d88cc" /></Tile> },
  { dot: true, el: <svg viewBox="0 0 56 56" className="w-[56px] h-[56px] overflow-visible"><ellipse cx="28" cy="28" rx="30" ry="31" fill="#fff" /><ellipse cx="28" cy="28" rx="25" ry="26" fill="#5450b5" /><path d="M24 0a14 14 0 0 0 0 24C34 26 32 10 30 2z" fill="#fff" /></svg> },
  { dot: true, el: <Tile bg="#7ed858"><rect x="27" y="0" width="2.500" height="30" rx="1" fill="#667" /></Tile> },
  { dot: true, el: <Tile bg="#964a47"><text x="28" y="38" textAnchor="middle" fontSize="30" fill="#f7efe4" fontFamily="Liberation Serif">Aa</text><path d="M5 56h8v5l-4-3-4 3z" fill="#d83c3c" /></Tile> },
  { dot: true, el: <Tile bg="#2b8ce6"><rect x="3" y="3" width="50" height="50" rx="11" fill="none" stroke="#a8d4fa" strokeWidth="1.500" /><path d="M32 10 18 40M24 10l14 30M9 34h38" stroke="#b8dcf8" strokeWidth="2" /><path d="M32 55 50 4" stroke="#333" strokeWidth="5" /><path d="M40 0c8-1 14 2 18 8l-6 2-14-4z" fill="#555" /></Tile> },
  { dot: true, el: <svg viewBox="0 0 56 56" className="w-[56px] h-[56px] overflow-visible"><rect x="-2" y="-2" width="60" height="60" rx="20" fill="#4a8cff" /><rect x="9" y="17" width="26" height="22" rx="5" fill="#fff" /><path d="m38 25 10-7v20l-10-7z" fill="#fff" /></svg> },
];

const DockCell = ({ el, dot }: { el: React.ReactNode; dot?: boolean }) => (
  <div className="w-[56px] flex flex-col items-center shrink-0">
    {el}
    <span className={`mt-[9px] w-[8px] h-[8px] rounded-full ${dot ? "bg-[#050510]" : ""}`} />
  </div>
);

function Dock() {
  return (
    <div className="absolute left-[56px] top-[16px] w-[2959px] h-[92px] rounded-[30px] border-2 border-[#ffffff30] bg-[linear-gradient(90deg,#5f789f_0%,#61779b_9%,#737174_11%,#737174_85%,#8f729c_93%,#92729e_100%)] flex items-start pt-[13px] pl-[12px]">
      <div className="flex gap-[18px]">
        {dock.map((d, i) => (
          <div key={i} className="relative">
            <DockCell el={d.el} dot={d.dot} />
            {i === 5 && <span className={`absolute -top-[8px] -right-[18px] h-[26px] w-[51px] rounded-[13px] bg-[#d8463f] text-white text-[13px] leading-[26px] text-center ${cjk}`}>12,933</span>}
            {i === 20 && <span className={`absolute -top-[8px] -right-[9px] h-[26px] w-[26px] rounded-full bg-[#d8463f] text-white text-[14px] leading-[26px] text-center ${cjk}`}>3</span>}
          </div>
        ))}
      </div>
      <span className="ml-[24px] mt-[-2px] w-[2px] h-[68px] bg-[#4c4a4e]" />
      <div className="ml-[24px] flex gap-[18px]">
        {dock2.map((d, i) => <DockCell key={i} el={d.el} dot={d.dot} />)}
      </div>
      <span className="ml-[25px] mt-[-2px] w-[2px] h-[68px] bg-[#5a4a64]" />
      <div className="ml-[22px] -mt-[2px] w-[58px] h-[60px] bg-white flex items-end justify-center shrink-0">
        <Paw className="w-[50px] h-[50px]" />
      </div>
      <div className="relative ml-[12px] mt-[12px] w-[66px] h-[40px] bg-[#f4f4f6] shrink-0">
        <span className="absolute left-[6px] top-[3px] w-[36px] h-[12px] border-t-[4px] border-b-[4px] border-dotted border-[#6aa3e8]" />
        <svg viewBox="0 0 22 30" className="absolute right-0 -bottom-[10px] w-[22px] h-[30px]"><rect width="22" height="30" rx="5" fill="#4aa3f5" /><path d="M12 0h5a5 5 0 0 1 5 5v20a5 5 0 0 1-5 5h-5z" fill="#e8ecf2" /></svg>
      </div>
      <div className="relative ml-[8px] mt-[12px] w-[64px] h-[40px] bg-[#1e2328] shrink-0">
        <svg viewBox="0 0 64 40" className="w-[64px] h-[40px]"><path d="M6 5h24M6 10h34M10 15h22M10 20h34M6 25h20M10 30h30M6 35h28" stroke="#6b7680" strokeWidth="1" strokeDasharray="4 1" /></svg>
        <svg viewBox="0 0 22 30" className="absolute right-0 -bottom-[10px] w-[22px] h-[30px]"><rect width="22" height="30" rx="4" fill="#fff" /><path d="M14 4 18 7v16l-4 3-8-8-3 2v-8l3 2z" fill="#2f7fc8" /></svg>
      </div>
      <svg viewBox="0 0 50 62" className="ml-[15px] -mt-[2px] w-[50px] h-[62px] shrink-0"><path d="M2 8h46l-5 50a4 4 0 0 1-4 4H11a4 4 0 0 1-4-4z" fill="#c9c3cf" opacity="0.900" /><ellipse cx="25" cy="8" rx="24" ry="6" fill="#e8e6ea" /><path d="m10 8 6-7 6 7zM26 8l8-8 6 8z" fill="#8a8a8a" /></svg>
    </div>
  );
}

function Desktop() {
  return (
    <div className="relative h-[118px] overflow-hidden bg-[linear-gradient(90deg,#0d2444_0%,#1a3a60_10%,#1a3a60_22%,#3a3b6a_85%,#6a3858_100%)]">
      <div className="absolute left-[332px] top-0 w-[2318px] h-[118px] bg-[#1b1b1b] text-[#9a9a9a] font-['Liberation_Sans',sans-serif] text-[30px]">
        <span className="absolute left-[215px] top-[0px] leading-[30px] text-[#8a8a8a]">index.css</span>
        <span className="absolute left-[214px] top-[98px] leading-[30px]">logo.svg</span>
        <span className="absolute left-[183px] top-[100px] w-[18px] h-[20px] bg-[#8a5cb8]" />
      </div>
      <div className="absolute left-[225px] top-0 w-[2785px] h-[11px] rounded-bl-[12px] rounded-br-[12px] bg-[#004c80]" />
      <div className="absolute left-[70px] top-0 w-[155px] h-[4px] bg-[#555]" />
      <Dock />
    </div>
  );
}

export default function App() {
  return (
    <div className="w-[3072px] h-[1920px] overflow-hidden bg-[linear-gradient(90deg,#a5305a_0%,#8a2a50_30%,#123a66_32%,#2a6aa5_100%)]">
      <MenuBar />
      <div className="h-[1752px] mt-[2px] rounded-[20px] overflow-hidden relative z-10">
        <TabStrip />
        <Toolbar />
        <Bookmarks />
        <Page />
        <DevTools />
      </div>
      <Desktop />
    </div>
  );
}
